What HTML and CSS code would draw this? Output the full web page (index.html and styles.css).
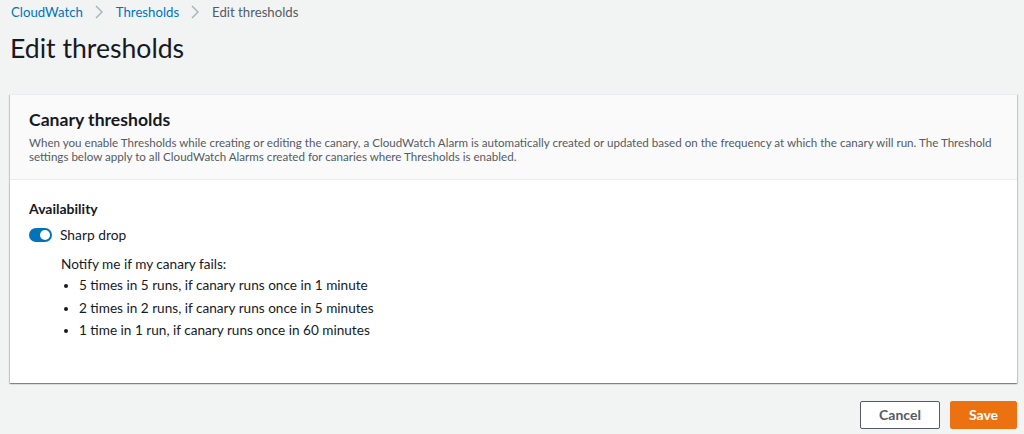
FILE: index.html
```html
<!DOCTYPE html>
<html lang="en">
<head>
    <meta charset="UTF-8">
    <meta name="viewport" content="width=device-width, initial-scale=1.0">
    <title>Edit thresholds</title>
    <link rel="stylesheet" href="styles.css">
</head>
<body>

    <div class="page">
        <nav class="breadcrumbs">
            <a href="#">CloudWatch</a>
            <svg class="sep" width="8" height="14" viewBox="0 0 8 14"><path d="M1 1 L7 7 L1 13" fill="none" stroke="#aab7b8" stroke-width="1.5"/></svg>
            <a href="#">Thresholds</a>
            <svg class="sep" width="8" height="14" viewBox="0 0 8 14"><path d="M1 1 L7 7 L1 13" fill="none" stroke="#aab7b8" stroke-width="1.5"/></svg>
            <span class="current">Edit thresholds</span>
        </nav>

        <h1>Edit thresholds</h1>

        <div class="card">
            <div class="card-header">
                <h2>Canary thresholds</h2>
                <p class="description">When you enable Thresholds while creating or editing the canary, a CloudWatch Alarm is automatically created or updated based on the frequency at which the canary will run. The Threshold settings below apply to all CloudWatch Alarms created for canaries where Thresholds is enabled.</p>
            </div>
            <div class="card-body">
                <h3>Availability</h3>
                <label class="toggle-row">
                    <span class="toggle"><span class="knob"></span></span>
                    <span>Sharp drop</span>
                </label>
                <div class="details">
                    <p>Notify me if my canary fails:</p>
                    <ul>
                        <li>5 times in 5 runs, if canary runs once in 1 minute</li>
                        <li>2 times in 2 runs, if canary runs once in 5 minutes</li>
                        <li>1 time in 1 run, if canary runs once in 60 minutes</li>
                    </ul>
                </div>
            </div>
        </div>

        <div class="actions">
            <button class="btn-cancel" type="button">Cancel</button>
            <button class="btn-save" type="button">Save</button>
        </div>
    </div>

</body>
</html>
```

FILE: styles.css
```css
body {
    font-family: Lato, Arial, sans-serif;
    background-color: #f2f3f3;
    color: #16191f;
    margin: 0;
    padding: 0;
}
.page {
    padding: 2px 7px 0 10px;
}
.breadcrumbs {
    font-size: 13.2px;
    display: flex;
    align-items: center;
    height: 20px;
    padding-left: 1px;
}
.breadcrumbs a {
    color: #0073bb;
    text-decoration: none;
}
.breadcrumbs .sep {
    margin: 0 13px 0 12px;
}
.breadcrumbs .current {
    color: #545b64;
}
h1 {
    font-size: 26.6px;
    font-weight: 400;
    margin: 9px 0 0;
    line-height: 34px;
}
.card {
    margin-top: 29px;
    background-color: #fff;
    box-shadow: 0 1px 1px 0 rgba(0, 28, 36, 0.3), 1px 1px 1px 0 rgba(0, 28, 36, 0.15), -1px 1px 1px 0 rgba(0, 28, 36, 0.15);
    border-top: 1px solid #eaeded;
}
.card-header {
    background-color: #fafafa;
    border-bottom: 1px solid #eaeded;
    padding: 13px 19px 15px;
}
h2 {
    font-size: 17.6px;
    font-weight: 700;
    margin: 0;
    line-height: 24px;
}
.description {
    font-size: 11.6px;
    color: #545b64;
    margin: 4px 0 0;
    line-height: 14px;
}
.card-body {
    padding: 20px 19px 41px;
}
h3 {
    font-size: 14px;
    font-weight: 700;
    margin: 0;
    line-height: 18px;
}
.toggle-row {
    display: flex;
    align-items: center;
    gap: 8px;
    font-size: 13.8px;
    margin-top: 7px;
    line-height: 20px;
}
.toggle {
    width: 23px;
    height: 14px;
    border-radius: 7px;
    background-color: #0073bb;
    position: relative;
}
.knob {
    position: absolute;
    top: 2px;
    right: 2px;
    width: 10px;
    height: 10px;
    border-radius: 50%;
    background-color: #fff;
}
.details {
    padding-left: 32px;
    font-size: 13.6px;
    margin-top: 9px;
}
.details p {
    margin: 0;
    line-height: 20px;
}
.details ul {
    margin: 0;
    padding-left: 18px;
}
.details li {
    line-height: 22.5px;
}
.actions {
    display: flex;
    justify-content: flex-end;
    gap: 10px;
    margin-top: 18px;
}
button {
    font-family: inherit;
    font-size: 14px;
    font-weight: 700;
    height: 28px;
    border-radius: 2px;
    cursor: pointer;
}
.btn-cancel {
    width: 80px;
    background-color: #fff;
    color: #545b64;
    border: 1px solid #545b64;
}
.btn-save {
    width: 67px;
    background-color: #ec7211;
    color: #fff;
    border: 1px solid #ec7211;
}
```
